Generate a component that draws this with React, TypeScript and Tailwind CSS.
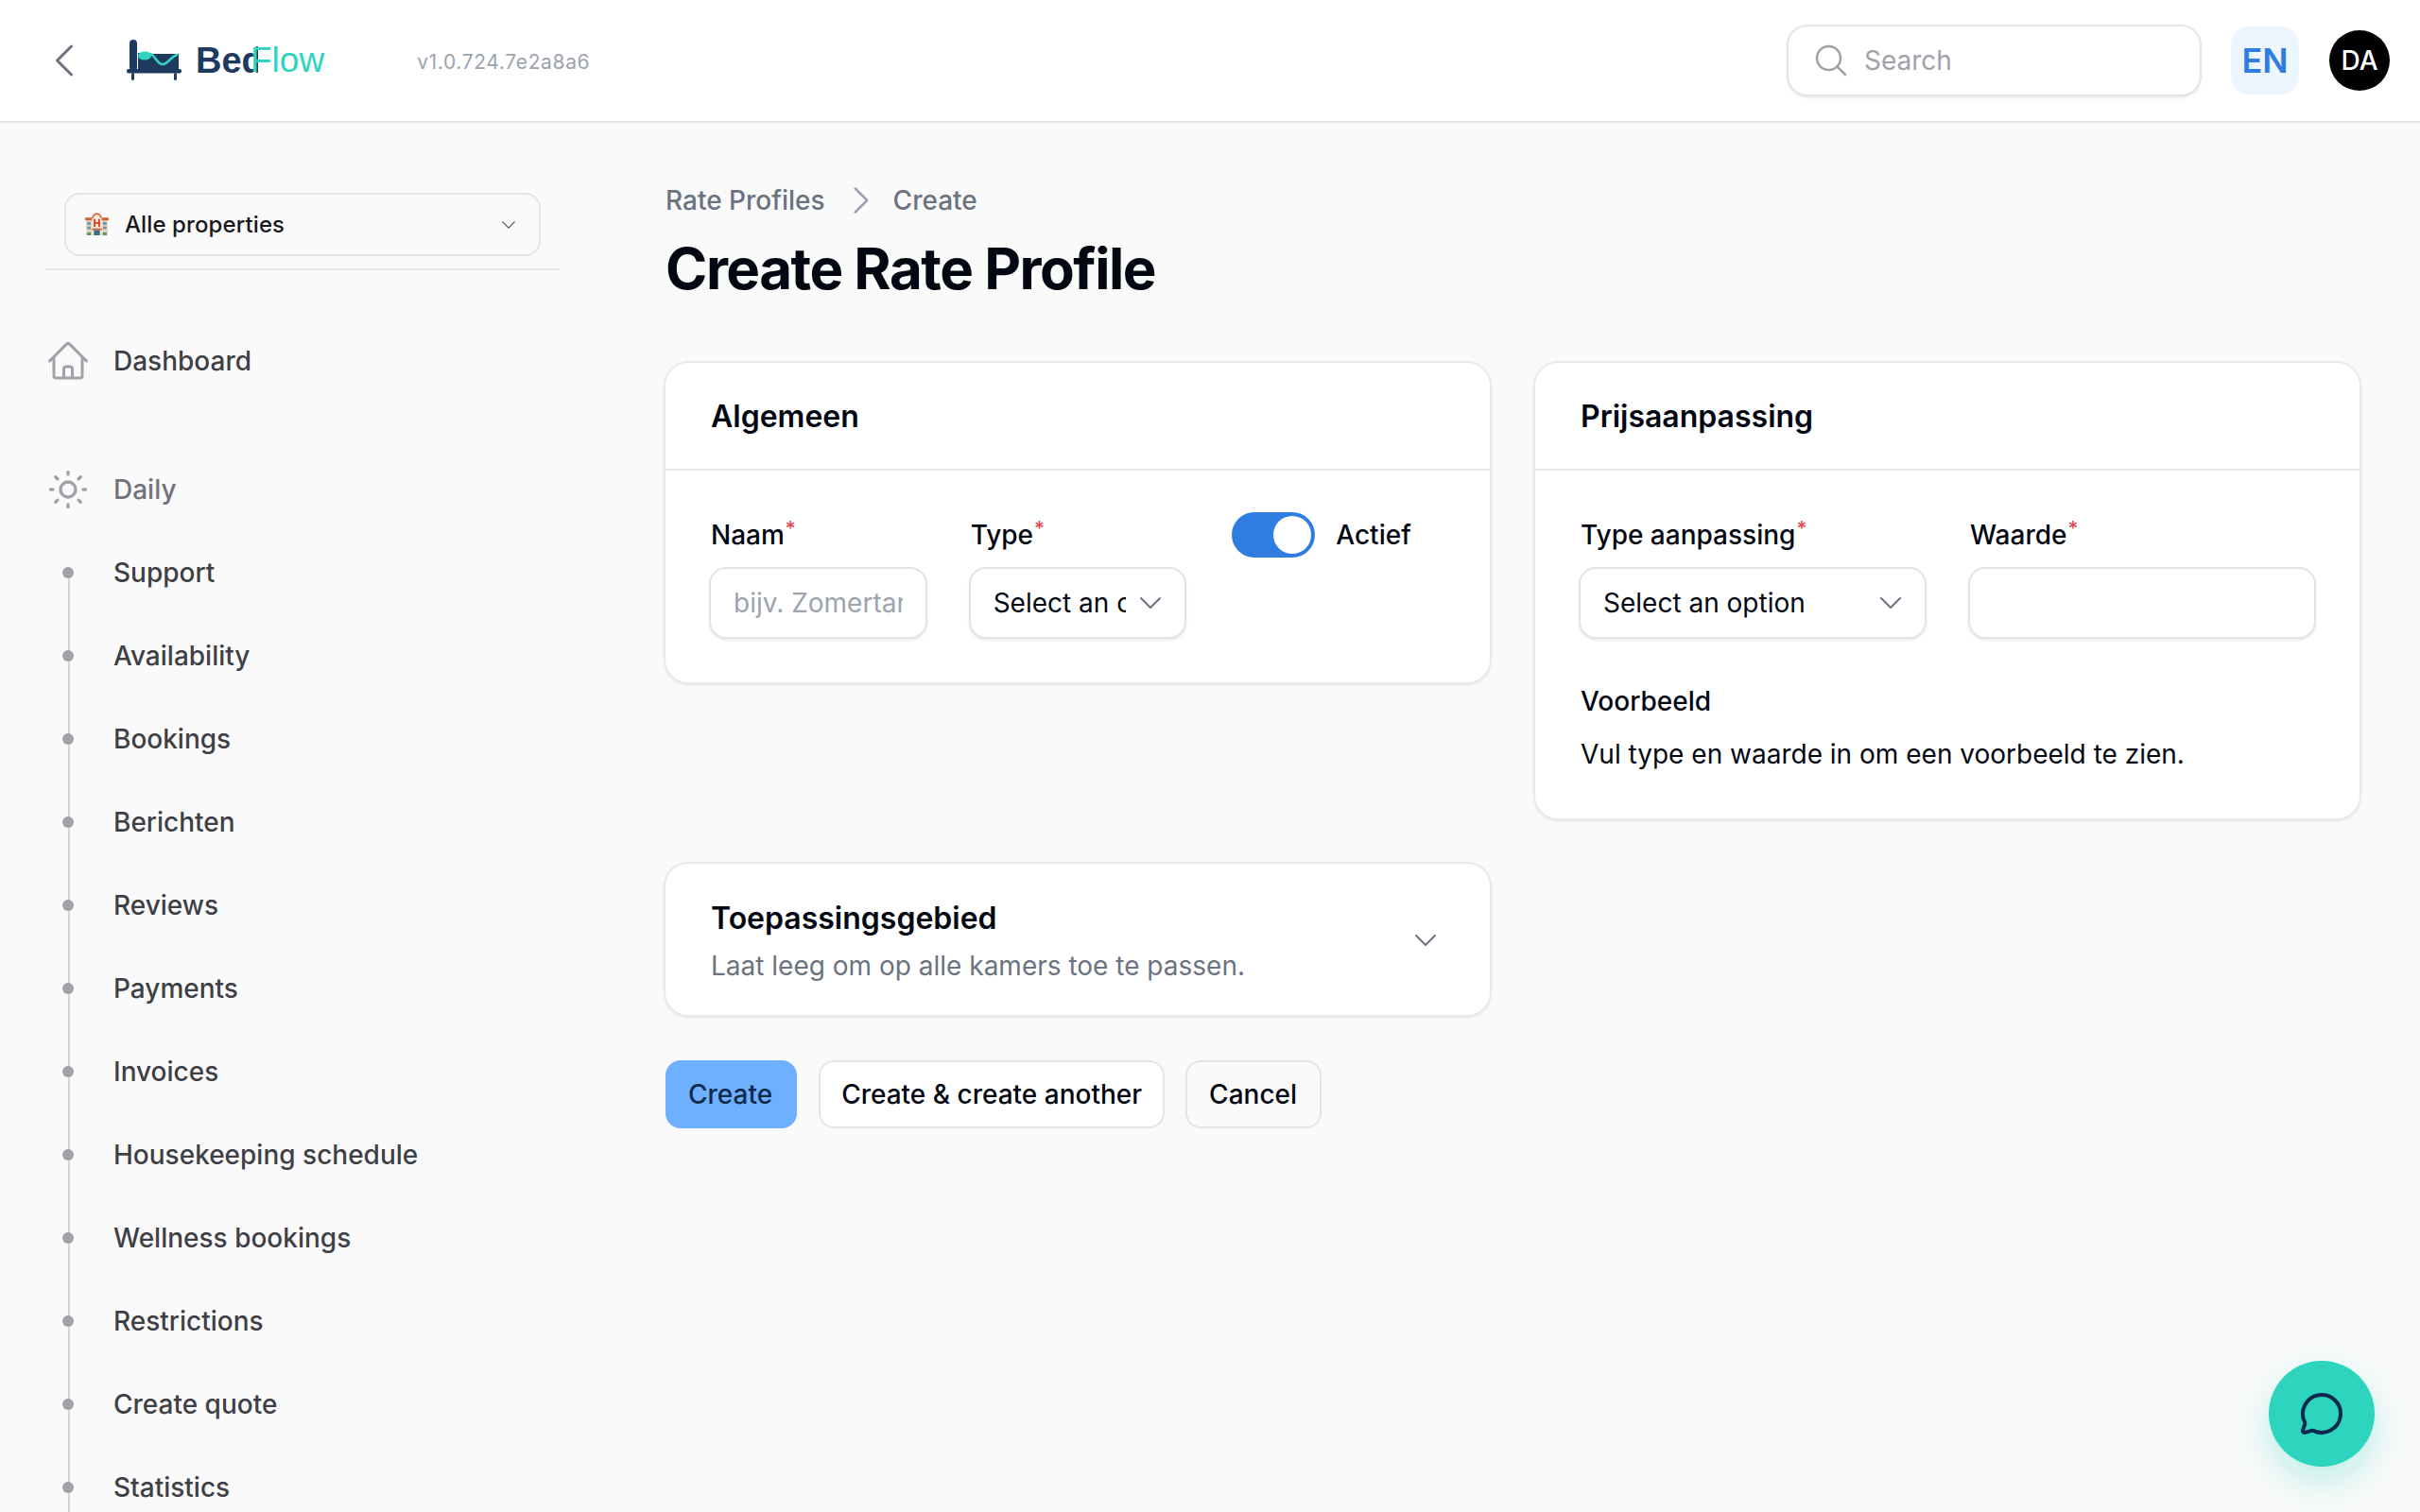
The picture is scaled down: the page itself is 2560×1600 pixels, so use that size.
import { MessageCircle } from "lucide-react";

const dailyItems = ["Support", "Availability", "Bookings", "Berichten", "Reviews", "Payments", "Invoices", "Housekeeping schedule", "Wellness bookings", "Restrictions", "Create quote", "Statistics"];

const Hero = ({ d, className }: { d: string; className: string }) => (
  <svg viewBox="0 0 24 24" fill="none" stroke="currentColor" strokeWidth={1.5} strokeLinecap="round" strokeLinejoin="round" className={className}>
    <path d={d} />
  </svg>
);

const CHEVRON_DOWN = "m19.5 8.25-7.5 7.5-7.5-7.5";

const Logo = () => (
  <div className="flex items-center">
    <svg viewBox="0 0 60 46" className="w-[60px] h-[46px]">
      <rect x="4" y="1" width="8" height="33" rx="4" fill="#1e3a5f" />
      <rect x="1" y="32" width="58" height="4.5" rx="2" fill="#1e3a5f" />
      <rect x="6" y="36" width="3" height="8" rx="1.5" fill="#1e3a5f" />
      <rect x="51" y="36" width="3" height="8" rx="1.5" fill="#1e3a5f" />
      <path d="M13 15h4v-1h4l2 2h33v17H13z" fill="#1e3a5f" />
      <ellipse cx="20" cy="18" rx="7" ry="4.5" fill="#2dd4bf" />
      <path d="M26 16c5 1 7 11 13 11s7-7 15-10" fill="none" stroke="#2dd4bf" strokeWidth="2.6" strokeLinecap="round" />
    </svg>
    <div className="ml-[14px] flex items-center text-[38px] leading-[46px] font-[Liberation_Sans,sans-serif]">
      <span className="inline-block w-[66px] overflow-hidden font-bold text-[#1e3a5f]">Bed</span>
      <span className="-ml-[8px] text-[#2dd4bf] text-[37px]">Flow</span>
    </div>
  </div>
);

const HotelEmoji = () => (
  <svg viewBox="0 0 24 24" className="w-[25px] h-[25px] shrink-0">
    <rect x="1" y="7" width="22" height="16" fill="#e4d9c8" />
    <rect x="0" y="5" width="8" height="3" rx="1" fill="#d95f33" />
    <rect x="16" y="5" width="8" height="3" rx="1" fill="#d95f33" />
    <path d="M7 5c0-3 2.500-4.500 5-4.500S17 2 17 5v18H7z" fill="#f3e6d3" />
    <path d="M7 5.500c0-3 2.500-5 5-5s5 2 5 5h-1.500c0-2-1.500-3.500-3.500-3.500S8.500 3.500 8.500 5.500z" fill="#d95f33" />
    <rect x="8.800" y="6.500" width="1.800" height="8" fill="#e0412c" />
    <rect x="13.400" y="6.500" width="1.800" height="8" fill="#e0412c" />
    <rect x="8.800" y="9.700" width="6.400" height="1.700" fill="#e0412c" />
    <rect x="7" y="16" width="10" height="1.800" fill="#d95f33" />
    <rect x="9" y="17.800" width="6" height="5.200" fill="#3c6a82" />
    <rect x="2.200" y="9.500" width="3.600" height="3" fill="#7d93a6" />
    <rect x="18.200" y="9.500" width="3.600" height="3" fill="#7d93a6" />
    <rect x="2.200" y="14" width="3.600" height="3" fill="#7d93a6" />
    <rect x="18.200" y="14" width="3.600" height="3" fill="#7d93a6" />
    <rect x="2" y="20" width="4" height="3" fill="#5c9a5a" />
    <rect x="18" y="20" width="4" height="3" fill="#5c9a5a" />
  </svg>
);

const SunIcon = () => (
  <svg viewBox="0 0 24 24" fill="none" stroke="currentColor" strokeWidth={1.7} strokeLinecap="round" className="w-[48px] h-[48px] text-[#a1a1aa]">
    <circle cx="12" cy="12" r="4" />
    <path d="M12 2.800v1.200M12 20v1.200M2.800 12H4M20 12h1.200M5.400 5.400l1 1M17.600 17.600l1 1M5.400 18.600l1-1M17.600 6.400l1-1" />
  </svg>
);

const Sidebar = () => (
  <aside className="w-[640px] shrink-0 pl-[48px] pr-[48px] pt-[74px]">
    <div className="mx-[20px] h-[67px] flex items-center pl-[20px] pr-[22px] rounded-[16px] border-2 border-[#e5e5e5]">
      <HotelEmoji />
      <span className="ml-[17px] text-[24px] tracking-[0.1px] font-medium text-[#18181b]">Alle properties</span>
      <Hero d={CHEVRON_DOWN} className="ml-auto w-[20px] h-[20px] text-[#52525b]" />
    </div>
    <div className="mt-[13px] h-[2px] bg-[#e5e5e5]" />
    <nav className="mt-[52px] text-[28px] font-medium">
      <div className="h-[88px] flex items-center gap-[24px] text-[#3f3f46]">
        <Hero d="m2.250 12 8.954-8.955c.44-.439 1.152-.439 1.591 0L21.750 12M4.500 9.750v10.125c0 .621.504 1.125 1.125 1.125H9.750v-4.875c0-.621.504-1.125 1.125-1.125h2.250c.621 0 1.125.504 1.125 1.125V21h4.125c.621 0 1.125-.504 1.125-1.125V9.750M8.250 21h8.250" className="w-[48px] h-[48px] text-[#a1a1aa]" />
        Dashboard
      </div>
      <div className="mt-[48px] h-[88px] flex items-center gap-[24px] text-[#71717a]">
        <SunIcon />
        Daily
      </div>
      <ul>
        {dailyItems.map((item) => (
          <li key={item} className="relative h-[88px] flex items-center gap-[24px] text-[#3f3f46]">
            <span className="absolute left-[24px] top-1/2 h-full w-[2px] bg-[#d4d4d8]" />
            <span className="relative w-[48px] flex justify-center">
              <span className="w-[12px] h-[12px] rounded-full bg-[#a1a1aa]" />
            </span>
            {item}
          </li>
        ))}
      </ul>
    </nav>
  </aside>
);

const Req = () => <sup className="text-[#e5484d] font-medium text-[21px] top-[-9px] ml-[1px]">*</sup>;

const Label = ({ text }: { text: string }) => (
  <div className="h-[40px] mb-[16px] text-[28px] leading-[40px] font-medium text-[#030712]">
    {text}
    <Req />
  </div>
);

const field = "h-[72px] rounded-[16px] bg-white ring-2 ring-[#e4e4e7] shadow-[0_2px_4px_rgba(0,0,0,0.18)]";

const SelectBox = ({ clip }: { clip?: boolean }) => (
  <div className={`${field} flex items-center pl-[24px] pr-[20px] text-[28px] text-[#030712]`}>
    <span className={clip ? "w-[140px] overflow-hidden whitespace-nowrap" : "whitespace-nowrap"}>Select an option</span>
    <Hero d={CHEVRON_DOWN} className="ml-auto w-[32px] h-[32px] text-[#6b7280] shrink-0" />
  </div>
);

const card = "bg-white rounded-[24px] ring-2 ring-[#e9e9eb] shadow-[0_2px_4px_rgba(0,0,0,0.14)]";

const CardHeader = ({ title }: { title: string }) => (
  <div className="h-[110px] pt-[2px] px-[48px] flex items-center border-b-2 border-[#e8e8ea] box-content">
    <h2 className="text-[32px] leading-[48px] font-semibold text-[#030712]">{title}</h2>
  </div>
);

export default function App() {
  return (
    <div className="relative w-[2560px] h-[1600px] overflow-hidden flex flex-col bg-[#fafafa] font-[Inter,sans-serif]">
      <header className="h-[130px] shrink-0 bg-white border-b-2 border-[#e5e5e5] flex items-center pl-[44px] pr-[32px]">
        <Hero d="M15.750 19.500 8.250 12l7.500-7.500" className="w-[48px] h-[48px] text-[#6b7280]" />
        <div className="ml-[41px]">
          <Logo />
        </div>
        <span className="ml-[98px] mt-[4px] text-[21px] tracking-[0.65px] text-[#9ca3af]">v1.0.724.7e2a8a6</span>
        <div className="ml-auto w-[435px] h-[72px] flex items-center pl-[25px] rounded-[20px] bg-white ring-2 ring-[#e4e4e7] shadow-[0_2px_4px_rgba(0,0,0,0.18)]">
          <Hero d="m21 21-5.197-5.197m0 0A7.500 7.500 0 1 0 5.196 5.196a7.500 7.500 0 0 0 10.607 10.607Z" className="w-[40px] h-[40px] text-[#a1a1aa]" />
          <span className="ml-[15px] text-[28px] text-[#a1a1aa]">Search</span>
        </div>
        <div className="ml-[33px] w-[72px] h-[72px] flex items-center justify-center rounded-[20px] bg-[#edf5ff] text-[36px] font-semibold text-[#2f7de1]">EN</div>
        <div className="ml-[32px] w-[64px] h-[64px] flex items-center justify-center rounded-full bg-black text-[28px] font-medium text-white">DA</div>
      </header>

      <div className="flex flex-1 min-h-0">
        <Sidebar />
        <main className="flex-1 pt-[62px] pl-[64px] pr-[64px]">
          <div className="flex items-center text-[28px] leading-[40px] font-medium text-[#6b7280]">
            Rate Profiles
            <Hero d="m8.250 4.500 7.500 7.500-7.500 7.500" className="ml-[18px] mr-[14px] w-[40px] h-[40px] text-[#9ca3af]" />
            Create
          </div>
          <h1 className="mt-[16px] text-[60px] leading-[72px] font-bold tracking-[-1.5px] text-[#030712]">Create Rate Profile</h1>

          <div className="mt-[64px] grid grid-cols-2 gap-[48px] items-start">
            <section className={card}>
              <CardHeader title="Algemeen" />
              <div className="p-[48px] grid grid-cols-3 gap-[48px]">
                <div>
                  <Label text="Naam" />
                  <input placeholder="bijv. Zomertarief" className={`${field} w-full px-[24px] text-[28px] outline-none placeholder:text-[#9ca3af]`} />
                </div>
                <div>
                  <Label text="Type" />
                  <SelectBox clip />
                </div>
                <div className="h-[40px] pl-[2px] flex items-center gap-[22px]">
                  <span className="w-[88px] h-[48px] rounded-full bg-[#2f7de1] flex items-center justify-end pr-[4px] shrink-0">
                    <span className="w-[40px] h-[40px] rounded-full bg-white" />
                  </span>
                  <span className="text-[28px] font-medium text-[#030712]">Actief</span>
                </div>
              </div>
            </section>

            <section className={card}>
              <CardHeader title="Prijsaanpassing" />
              <div className="p-[48px]">
                <div className="grid grid-cols-2 gap-[48px]">
                  <div>
                    <Label text="Type aanpassing" />
                    <SelectBox />
                  </div>
                  <div>
                    <Label text="Waarde" />
                    <input className={`${field} w-full px-[24px] text-[28px] outline-none`} />
                  </div>
                </div>
                <div className="mt-[48px] text-[28px] leading-[40px] font-medium text-[#030712]">Voorbeeld</div>
                <p className="mt-[16px] text-[28px] leading-[40px] text-[#030712]">Vul type en waarde in om een voorbeeld te zien.</p>
              </div>
            </section>

            <section className={`${card} h-[160px] px-[48px] flex items-center justify-between`}>
              <div className="pt-[2px]">
                <h2 className="text-[32px] leading-[48px] font-semibold text-[#030712]">Toepassingsgebied</h2>
                <p className="mt-[6px] text-[28px] leading-[40px] text-[#6b7280]">Laat leeg om op alle kamers toe te passen.</p>
              </div>
              <Hero d={CHEVRON_DOWN} className="w-[32px] h-[32px] mt-[2px] mr-[4px] text-[#6b7280]" />
            </section>
          </div>

          <div className="mt-[48px] flex">
            <button className="mr-[23px] h-[72px] pl-[24px] pr-[26px] rounded-[16px] bg-[#6cb0ff] text-[28px] font-medium text-[#102a4c]">Create</button>
            <button className="mr-[22px] h-[72px] px-[24px] rounded-[16px] bg-white ring-2 ring-inset ring-[#e4e4e7] text-[28px] font-medium text-[#030712]">Create &amp; create another</button>
            <button className="h-[72px] pl-[25px] pr-[26px] rounded-[16px] ring-2 ring-inset ring-[#e4e4e7] text-[28px] font-medium text-[#030712]">Cancel</button>
          </div>
        </main>
      </div>

      <button className="absolute left-[2400px] top-[1440px] w-[112px] h-[112px] rounded-full bg-[#2dd5bf] flex items-center justify-center text-[#0f2a4e] shadow-[0_16px_40px_rgba(45,213,191,0.3)]">
        <MessageCircle className="w-[48px] h-[48px]" strokeWidth={2} />
      </button>
    </div>
  );
}
